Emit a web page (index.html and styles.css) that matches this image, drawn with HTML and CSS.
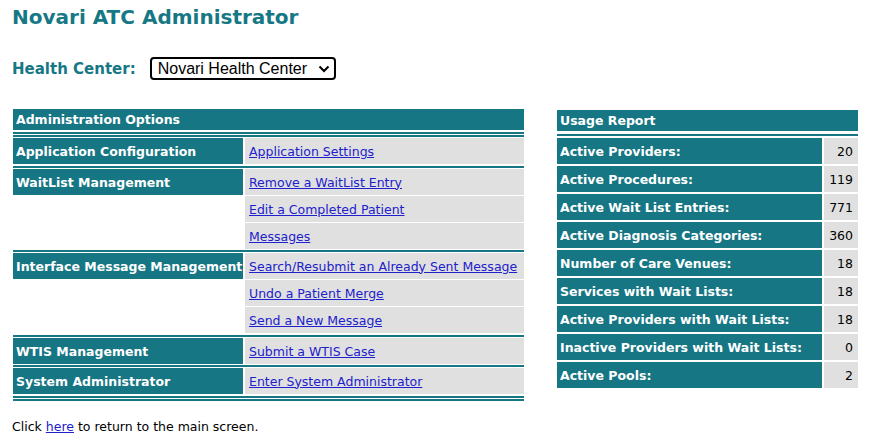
FILE: index.html
```html
<!DOCTYPE html>
<html>
<head>
<meta charset="utf-8">
<title>Novari ATC Administrator</title>
<link rel="stylesheet" href="styles.css">
</head>
<body>
<div class="page">
  <h1 class="title">Novari ATC Administrator</h1>
  <div class="hc-row">
    <label class="hc-label" for="hc">Health Center:</label>
    <span class="select-wrap">
      <select id="hc" class="hc-select"><option>Novari Health Center</option></select>
      <svg class="chev" width="12" height="8" viewBox="0 0 12 8"><path d="M1.5 1.5 L6 6 L10.5 1.5" fill="none" stroke="#000" stroke-width="2"/></svg>
    </span>
  </div>

  <div class="tables">
    <table class="admin">
      <colgroup><col class="c-label"><col class="c-link"></colgroup>
      <tr><td class="head" colspan="2">Administration Options</td></tr>
      <tr><td class="sep-double" colspan="2"><div class="ln"></div><div class="ln"></div></td></tr>
      <tr><td class="lbl">Application Configuration</td><td class="lnk"><a href="#">Application Settings</a></td></tr>
      <tr><td class="sep" colspan="2"><div class="ln"></div></td></tr>
      <tr><td class="lbl">WaitList Management</td><td class="lnk"><a href="#">Remove a WaitList Entry</a></td></tr>
      <tr><td class="blank"></td><td class="lnk"><a href="#">Edit a Completed Patient</a></td></tr>
      <tr><td class="blank"></td><td class="lnk"><a href="#">Messages</a></td></tr>
      <tr><td class="sep tight" colspan="2"><div class="ln"></div></td></tr>
      <tr><td class="lbl">Interface Message Management</td><td class="lnk"><a href="#">Search/Resubmit an Already Sent Message</a></td></tr>
      <tr><td class="blank"></td><td class="lnk"><a href="#">Undo a Patient Merge</a></td></tr>
      <tr><td class="blank"></td><td class="lnk"><a href="#">Send a New Message</a></td></tr>
      <tr><td class="sep" colspan="2"><div class="ln"></div></td></tr>
      <tr><td class="lbl">WTIS Management</td><td class="lnk"><a href="#">Submit a WTIS Case</a></td></tr>
      <tr><td class="sep tight" colspan="2"><div class="ln"></div></td></tr>
      <tr><td class="lbl">System Administrator</td><td class="lnk"><a href="#">Enter System Administrator</a></td></tr>
      <tr><td class="sep-double" colspan="2"><div class="ln"></div><div class="ln"></div></td></tr>
    </table>

    <table class="usage">
      <colgroup><col class="u-label"><col class="u-val"></colgroup>
      <tr><td class="head" colspan="2">Usage Report</td></tr>
      <tr><td class="usep" colspan="2"><div class="ln"></div></td></tr>
      <tr><td class="lbl">Active Providers:</td><td class="val">20</td></tr>
      <tr><td class="lbl">Active Procedures:</td><td class="val">119</td></tr>
      <tr><td class="lbl">Active Wait List Entries:</td><td class="val">771</td></tr>
      <tr><td class="lbl">Active Diagnosis Categories:</td><td class="val">360</td></tr>
      <tr><td class="lbl">Number of Care Venues:</td><td class="val">18</td></tr>
      <tr><td class="lbl">Services with Wait Lists:</td><td class="val">18</td></tr>
      <tr><td class="lbl">Active Providers with Wait Lists:</td><td class="val">18</td></tr>
      <tr><td class="lbl">Inactive Providers with Wait Lists:</td><td class="val">0</td></tr>
      <tr><td class="lbl">Active Pools:</td><td class="val">2</td></tr>
    </table>
  </div>

  <p class="footer">Click <a href="#">here</a> to return to the main screen.</p>
</div>
</body>
</html>
```

FILE: styles.css
```css
html, body {
  margin: 0;
  padding: 0;
  background: #ffffff;
}

body {
  font-family: "DejaVu Sans", Verdana, sans-serif;
  font-size: 12.5px;
  color: #000;
}

.page {
  padding: 5px 0 0 12px;
}

.title {
  margin: 0;
  font-size: 20px;
  line-height: 24px;
  font-weight: bold;
  color: #177885;
}

.hc-row {
  margin-top: 28px;
  height: 23px;
  display: flex;
  align-items: center;
}

.hc-label {
  font-size: 15px;
  font-weight: bold;
  color: #177885;
}

.select-wrap {
  position: relative;
  margin-left: 14px;
  display: inline-block;
}

.hc-select {
  -webkit-appearance: none;
  appearance: none;
  box-sizing: border-box;
  width: 186px;
  height: 23px;
  border: 2px solid #000;
  border-radius: 4px;
  background: #fff;
  padding: 0 0 0 6px;
  font-family: "Liberation Sans", Arial, sans-serif;
  font-size: 16px;
  color: #000;
  display: block;
}

.chev {
  position: absolute;
  right: 6px;
  top: 8px;
  pointer-events: none;
}

.tables {
  display: flex;
  align-items: flex-start;
  margin-top: 28px;
  margin-left: -1px;
}

table {
  border-collapse: separate;
}

.admin {
  border-spacing: 2px 1px;
  width: 515px;
  table-layout: fixed;
}

.c-label { width: 230px; }
.c-link { width: 279px; }

.usage {
  border-spacing: 2px;
  width: 305px;
  table-layout: fixed;
  margin-left: 29px;
}

.u-label { width: 265px; }
.u-val { width: 34px; }

td {
  padding: 0 3px;
  white-space: nowrap;
}

.head {
  background: #167684;
  color: #fff;
  font-weight: bold;
  height: 21px;
}

.lbl {
  background: #167684;
  color: #fff;
  font-weight: bold;
  height: 26px;
}

.usage .lbl,
.usage .val {
  height: 26px;
}

.lnk {
  background: #e0e0e0;
  height: 26px;
  padding-left: 4px;
}

.val {
  background: #e0e0e0;
  text-align: right;
  padding-right: 5px;
}

.blank {
  background: transparent;
}

.sep,
.sep-double,
.usep {
  padding: 0;
  height: auto;
}

.sep .ln,
.sep-double .ln {
  height: 2px;
  margin-top: 1px;
  background: #167684;
}

.sep.tight .ln {
  margin-top: 0;
}

.usep .ln {
  height: 2px;
  margin-top: 1px;
  background: #167684;
}

a {
  color: #2020cc;
}

.footer {
  margin: 17px 0 0 0;
  line-height: 16px;
}
```
